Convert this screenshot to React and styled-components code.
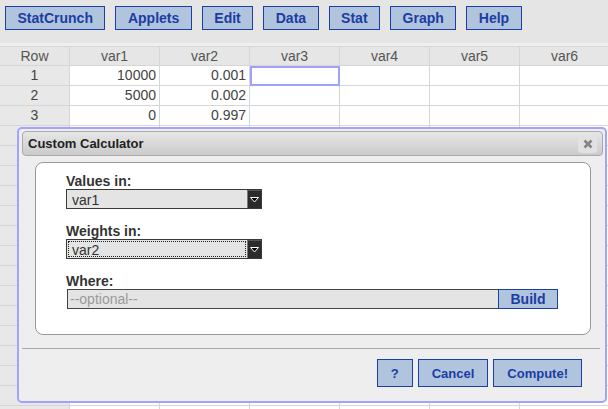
import React from 'react'
import styled, { createGlobalStyle } from 'styled-components'

const GlobalStyle = createGlobalStyle`
  html, body { margin: 0; padding: 0; }
  body {
    font-family: "Liberation Sans", Arial, sans-serif;
    background: #ffffff;
    overflow: hidden;
  }
`

const menus = ['StatCrunch', 'Applets', 'Edit', 'Data', 'Stat', 'Graph', 'Help']
const columns = ['var1', 'var2', 'var3', 'var4', 'var5', 'var6']
const data = [
  ['10000', '0.001'],
  ['5000', '0.002'],
  ['0', '0.997'],
]
const ROWS = 18

const App = () => {
  return (
    <Page>
      <GlobalStyle />
      <Toolbar>
        {menus.map(m => <MenuButton key={m}>{m}</MenuButton>)}
      </Toolbar>
      <Strip />
      <Grid>
        <HeadCell>Row</HeadCell>
        {columns.map(c => <HeadCell key={c}>{c}</HeadCell>)}
        {Array.from({ length: ROWS }).map((_, r) => (
          <React.Fragment key={r}>
            <RowCell>{r + 1}</RowCell>
            {columns.map((c, ci) => (
              <DataCell key={c} selected={r === 0 && ci === 2}>
                {data[r] && data[r][ci]}
              </DataCell>
            ))}
          </React.Fragment>
        ))}
      </Grid>

      <Dialog>
        <TitleBar>
          <Title>Custom Calculator</Title>
          <CloseButton>
            <svg width="10" height="10" viewBox="0 0 10 10">
              <path d="M1.5 1.5 L8.5 8.5 M8.5 1.5 L1.5 8.5" stroke="#858585" strokeWidth="2.6" />
            </svg>
          </CloseButton>
        </TitleBar>
        <Panel>
          <Field>
            <Label>Values in:</Label>
            <Select>
              <SelectText>var1</SelectText>
              <Arrow><ArrowIcon /></Arrow>
            </Select>
          </Field>
          <Field>
            <Label>Weights in:</Label>
            <Select>
              <SelectText focused>var2</SelectText>
              <Arrow><ArrowIcon /></Arrow>
            </Select>
          </Field>
          <Field>
            <Label>Where:</Label>
            <InputRow>
              <WhereInput placeholder="--optional--" readOnly />
              <BuildButton>Build</BuildButton>
            </InputRow>
          </Field>
        </Panel>
        <Separator />
        <Actions>
          <ActionButton>?</ActionButton>
          <ActionButton>Cancel</ActionButton>
          <ActionButton>Compute!</ActionButton>
        </Actions>
      </Dialog>
    </Page>
  )
}
export default App

const ArrowIcon = () => (
  <svg width="9" height="6" viewBox="0 0 9 6">
    <polygon points="0.5,0.5 8.5,0.5 4.5,5" fill="#000" stroke="#fff" strokeWidth="1" />
  </svg>
)

const Page = styled.div`
  position: relative;
  width: 608px;
  height: 409px;
  overflow: hidden;
  background: #ffffff;
`
const Toolbar = styled.div`
  display: flex;
  gap: 10px;
  height: 43px;
  padding: 6px 5px 0;
  box-sizing: border-box;
  background: #e5e5e5;
`
const Strip = styled.div`
  height: 3px;
  background: #efefef;
`
const blueButton = `
  background: #b0c4de;
  border: 1px solid #1c3fa6;
  color: #1b3da3;
  font-family: "Liberation Sans", Arial, sans-serif;
  font-weight: bold;
  box-sizing: border-box;
  cursor: pointer;
`
const MenuButton = styled.button`
  ${blueButton}
  height: 24px;
  padding: 0 11.5px;
  font-size: 14px;
`
const Grid = styled.div`
  display: grid;
  grid-template-columns: 70px repeat(6, 90px);
  grid-auto-rows: 20px;
  font-size: 14px;
  color: #444;
`
const cellBase = `
  box-sizing: border-box;
  border-right: 1px solid #d6d6d6;
  border-bottom: 1px solid #d6d6d6;
  line-height: 19px;
  white-space: nowrap;
`
const HeadCell = styled.div`
  ${cellBase}
  background: #e6e6e6;
  text-align: center;
  color: #555;
  border-top: 1px solid #d6d6d6;
  line-height: 18px;
`
const RowCell = styled.div`
  ${cellBase}
  background: #e8e8e8;
  text-align: center;
  color: #444;
`
const DataCell = styled.div`
  ${cellBase}
  background: #fff;
  text-align: right;
  padding-right: 3px;
  outline: ${p => (p.selected ? '2px solid #a0a0ff' : 'none')};
  outline-offset: -2px;
  margin-right: ${p => (p.selected ? '0' : '0')};
`
const Dialog = styled.div`
  position: absolute;
  left: 17px;
  top: 127px;
  width: 590px;
  box-sizing: border-box;
  border: 2px solid #a3a3ff;
  border-radius: 5px;
  background: #eeeeee;
  padding: 2px 2px 14px 3px;
`
const TitleBar = styled.div`
  display: flex;
  align-items: center;
  justify-content: space-between;
  height: 25px;
  box-sizing: border-box;
  border: 1px solid #aaaaaa;
  border-radius: 4px;
  background: linear-gradient(#e6e6e6, #cbcbcb);
  padding: 0 5px 0 5px;
`
const Title = styled.span`
  font-size: 13px;
  font-weight: bold;
  color: #222;
`
const CloseButton = styled.span`
  display: flex;
  align-items: center;
  justify-content: center;
  width: 19px;
  height: 18px;
  border-radius: 3px;
  background: #e2e2e2;
`
const Panel = styled.div`
  margin: 6px 12px 0 13px;
  background: #fff;
  border: 1px solid #999;
  border-radius: 8px;
  padding: 10px 30px 25px;
`
const Field = styled.div`
  & + & { margin-top: 14px; }
`
const Label = styled.div`
  font-size: 14px;
  font-weight: bold;
  color: #333;
  line-height: 16px;
`
const Select = styled.div`
  display: flex;
  width: 196px;
  height: 20px;
  box-sizing: border-box;
  border: 1px solid #3a3a3a;
  background: #e4e4e4;
`
const SelectText = styled.div`
  flex: 1;
  margin: 1px;
  padding-left: 3px;
  font-size: 14px;
  color: #333;
  line-height: 16px;
  border: 1px dotted ${p => (p.focused ? '#222' : 'transparent')};
`
const Arrow = styled.div`
  width: 14px;
  display: flex;
  align-items: center;
  justify-content: center;
  background: #2b2b2b;
  border-left: 1px solid #7a7a7a;
  border-top: 1px solid #555;
  box-sizing: border-box;
`
const InputRow = styled.div`
  display: flex;
  padding-left: 1px;
`
const WhereInput = styled.input`
  width: 431px;
  height: 20px;
  box-sizing: border-box;
  border: 1px solid #444;
  border-right: none;
  background: #e4e4e4;
  font-family: "Liberation Sans", Arial, sans-serif;
  font-size: 14px;
  padding: 0 2px;
  outline: none;
  &::placeholder { color: #9a9a9a; }
`
const BuildButton = styled.button`
  ${blueButton}
  width: 60px;
  height: 20px;
  padding: 0;
  font-size: 14px;
`
const Separator = styled.div`
  margin: 13px 3px 0 0;
  border-top: 1px solid #aaaaaa;
`
const Actions = styled.div`
  display: flex;
  justify-content: flex-end;
  gap: 5px;
  margin-top: 10px;
  padding-right: 21px;
`
const ActionButton = styled.button`
  ${blueButton}
  height: 28px;
  padding: 0 13px;
  font-size: 13px;
`
